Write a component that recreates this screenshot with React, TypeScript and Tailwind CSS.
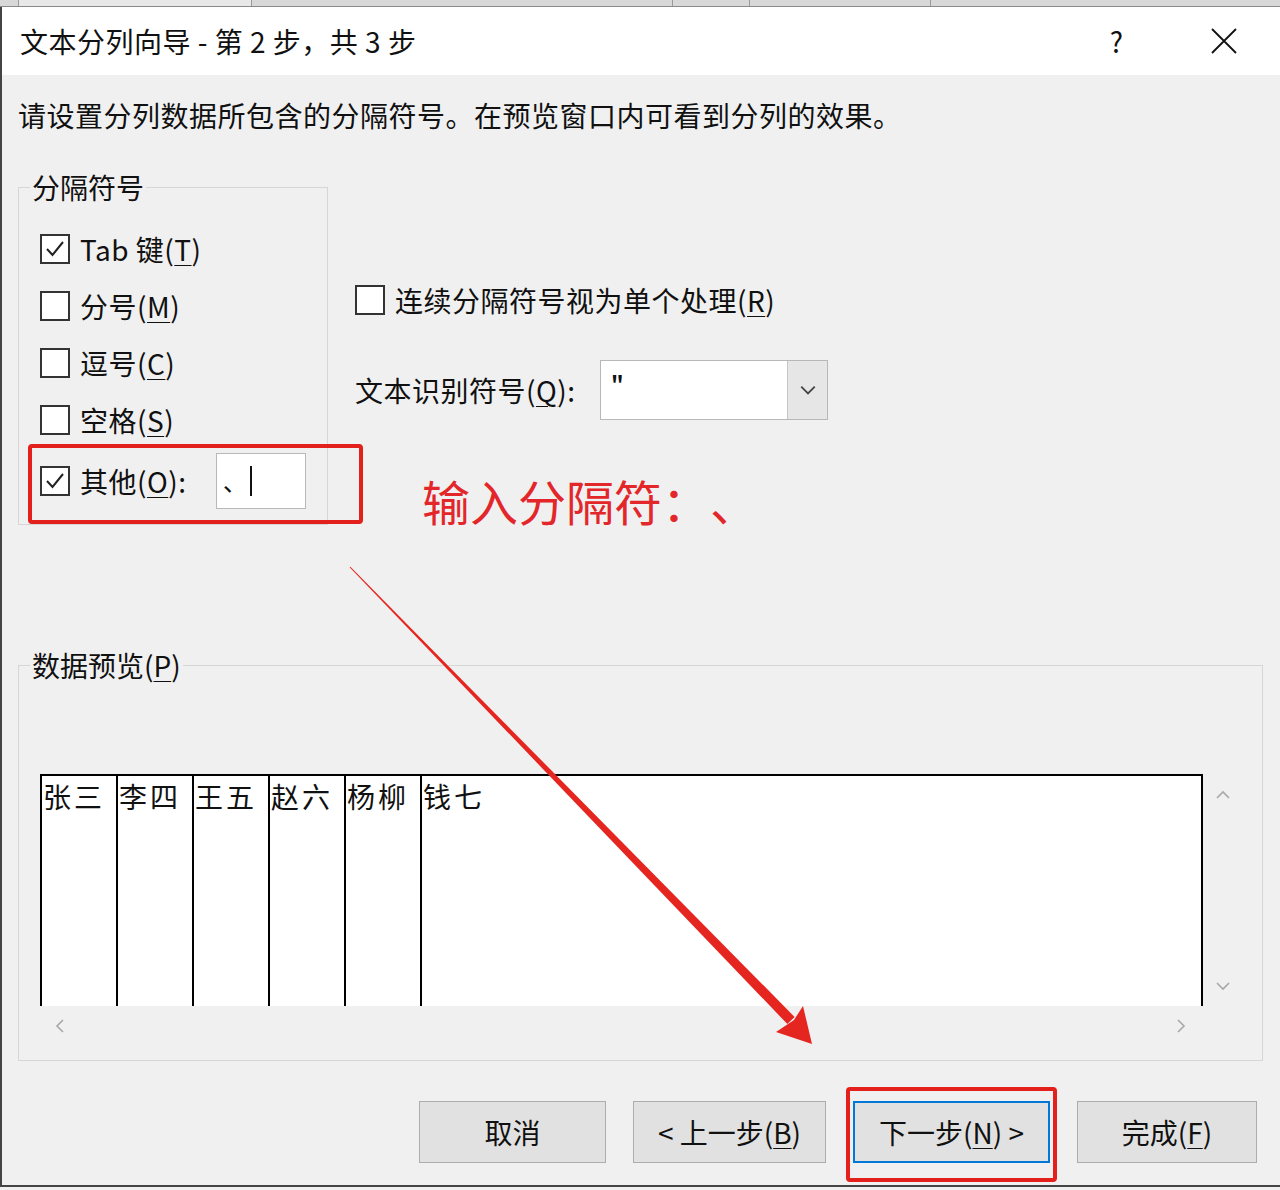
import React from "react";

const U = ({ c }: { c: string }) => (
  <span className="underline decoration-1 underline-offset-[4px]">{c}</span>
);

function Box({ checked }: { checked?: boolean }) {
  return (
    <span className="flex h-[30px] w-[30px] shrink-0 items-center justify-center border-2 border-[#333] bg-white">
      {checked && (
        <svg width="22" height="22" viewBox="0 0 22 22">
          <polyline points="3,11 8.5,17 19,4" fill="none" stroke="#222" strokeWidth="2" />
        </svg>
      )}
    </span>
  );
}

function Chevron({ dir, color = "#a8a8a8", size = 16 }: { dir: "up" | "down" | "left" | "right"; color?: string; size?: number }) {
  const pts = {
    up: "2,11 8,5 14,11",
    down: "2,5 8,11 14,5",
    left: "11,2 5,8 11,14",
    right: "5,2 11,8 5,14",
  }[dir];
  return (
    <svg width={size} height={size} viewBox="0 0 16 16">
      <polyline points={pts} fill="none" stroke={color} strokeWidth="1.6" />
    </svg>
  );
}

const names = ["张三", "李四", "王五", "赵六", "杨柳"];

export default function App() {
  return (
    <div className="relative h-[1190px] w-[1280px] overflow-hidden bg-[#f0f0f0] font-['Noto_Sans_CJK_SC','Microsoft_YaHei',sans-serif] text-[#111] [text-spacing-trim:space-all]">
      {/* strip of the window behind */}
      <div className="flex h-[7px] border-b border-[#8a8a8a] bg-[#d8d8d8]">
        <div className="ml-[18px] w-[240px] border-x border-[#9a9a9a] bg-[#e8e8e8]" />
        <div className="ml-[420px] w-[80px] border-x border-[#9a9a9a]" />
        <div className="ml-[180px] w-[360px] border-l border-[#9a9a9a]" />
      </div>

      {/* dialog */}
      <div className="border-b-2 border-l-2 border-[#444]">
        {/* title bar */}
        <div className="flex h-[68px] items-center bg-white pl-[18px] pr-[43px]">
          <span className="text-[28px] leading-none tracking-[0.5px]">文本分列向导 - 第 2 步，共 3 步</span>
          <span className="ml-auto text-[28px] leading-none">?</span>
          <svg className="ml-[88px]" width="26" height="26" viewBox="0 0 26 26">
            <path d="M1 1 L25 25 M25 1 L1 25" stroke="#111" strokeWidth="1.8" />
          </svg>
        </div>

        {/* body */}
        <div className="px-[16px] pb-[22px] pt-[20px]">
          <p className="text-[28px] leading-[40px] tracking-[0.5px]">
            请设置分列数据所包含的分隔符号。在预览窗口内可看到分列的效果。
          </p>

          <div className="mt-[32px] flex items-start">
            {/* delimiter group */}
            <fieldset className="w-[310px] border border-[#d6d6d6]">
              <legend className="ml-[11px] px-[2px] text-[28px] leading-[40px]">分隔符号</legend>
              <div className="px-[21px] pb-[10px] pt-[13px] text-[28px] tracking-[0.5px]">
                <div className="flex h-[57px] items-center gap-[10px]">
                  <Box checked />
                  <span>
                    Tab 键(<U c="T" />)
                  </span>
                </div>
                <div className="flex h-[57px] items-center gap-[10px]">
                  <Box />
                  <span>
                    分号(<U c="M" />)
                  </span>
                </div>
                <div className="flex h-[57px] items-center gap-[10px]">
                  <Box />
                  <span>
                    逗号(<U c="C" />)
                  </span>
                </div>
                <div className="flex h-[57px] items-center gap-[10px]">
                  <Box />
                  <span>
                    空格(<U c="S" />)
                  </span>
                </div>
                <div className="relative flex h-[66px] items-center gap-[10px]">
                  <Box checked />
                  <span>
                    其他(<U c="O" />):
                  </span>
                  <div className="ml-auto flex h-[56px] w-[90px] items-center border border-[#b8b8b8] bg-white pl-[6px]">
                    <span className="text-[24px] leading-none">、</span>
                    <span className="ml-[2px] h-[30px] w-[2px] bg-[#111]" />
                  </div>
                  <div className="pointer-events-none absolute bottom-[-10px] left-[-12px] right-[-57px] top-[-4px] rounded-[4px] border-[4px] border-[#e3201b]" />
                </div>
              </div>
            </fieldset>

            {/* right column */}
            <div className="ml-[27px] flex flex-col text-[28px] tracking-[0.5px]">
              <div className="mt-[113px] flex h-[40px] items-center gap-[10px]">
                <Box />
                <span>
                  连续分隔符号视为单个处理(<U c="R" />)
                </span>
              </div>
              <div className="mt-[40px] flex h-[60px] items-center">
                <span className="w-[245px]">
                  文本识别符号(<U c="Q" />):
                </span>
                <div className="flex h-[60px] w-[228px] border border-[#b8b8b8] bg-white">
                  <div className="flex-1 pl-[10px] pt-[10px] text-[22px] font-bold leading-none">"</div>
                  <div className="flex w-[40px] items-center justify-center border-l border-[#c6c6c6] bg-[#e6e6e6]">
                    <Chevron dir="down" color="#444" size={18} />
                  </div>
                </div>
              </div>
              <div className="ml-[67px] mt-[50px] text-[48px] leading-[60px] tracking-normal text-[#e3262a]">输入分隔符：、</div>
            </div>
          </div>

          {/* preview group */}
          <fieldset className="mt-[115px] w-[1245px] border border-[#d6d6d6]">
            <legend className="ml-[11px] px-[2px] text-[28px] leading-[40px]">
              数据预览(<U c="P" />)
            </legend>
            <div className="pb-[14px] pl-[21px] pt-[89px]">
              <div className="grid grid-cols-[1163px_40px] grid-rows-[232px_40px]">
                <div className="flex border-x-2 border-t-2 border-black bg-white">
                  {names.map((n) => (
                    <div key={n} className="w-[76px] border-r-2 border-black pl-[1px] text-[28px] leading-[40px] tracking-[3px]">
                      {n}
                    </div>
                  ))}
                  <div className="flex-1 pl-[1px] text-[28px] leading-[40px] tracking-[3px]">钱七</div>
                </div>
                <div className="flex flex-col items-center justify-between pb-[12px] pt-[13px]">
                  <Chevron dir="up" />
                  <Chevron dir="down" />
                </div>
                <div className="flex items-center justify-between pl-[12px] pr-[14px]">
                  <Chevron dir="left" />
                  <Chevron dir="right" />
                </div>
                <div />
              </div>
            </div>
          </fieldset>

          {/* buttons */}
          <div className="mt-[40px] flex justify-end gap-[27px] pr-[7px] text-[28px]">
            <button className="h-[62px] w-[187px] border border-[#adadad] bg-[#e1e1e1]">取消</button>
            <button className="h-[62px] w-[193px] border border-[#adadad] bg-[#e1e1e1]">
              &lt; 上一步(<U c="B" />)
            </button>
            <div className="relative">
              <button className="h-[62px] w-[197px] border-2 border-[#0078d7] bg-[#e1e1e1]">
                下一步(<U c="N" />) &gt;
              </button>
              <div className="pointer-events-none absolute bottom-[-19px] left-[-7px] right-[-7px] top-[-14px] rounded-[4px] border-[4px] border-[#e3201b]" />
            </div>
            <button className="h-[62px] w-[180px] border border-[#adadad] bg-[#e1e1e1]">
              完成(<U c="F" />)
            </button>
          </div>
        </div>
      </div>

      {/* annotation arrow */}
      <svg className="pointer-events-none absolute inset-0" width="1280" height="1190" viewBox="0 0 1280 1190">
        <polygon points="350.4,566.7 794.6,1016.9 787.4,1024.1 349.6,567.3" fill="#e52620" />
        <polygon points="812,1044 803,1006 794,1020 776,1032" fill="#e52620" />
      </svg>
    </div>
  );
}
